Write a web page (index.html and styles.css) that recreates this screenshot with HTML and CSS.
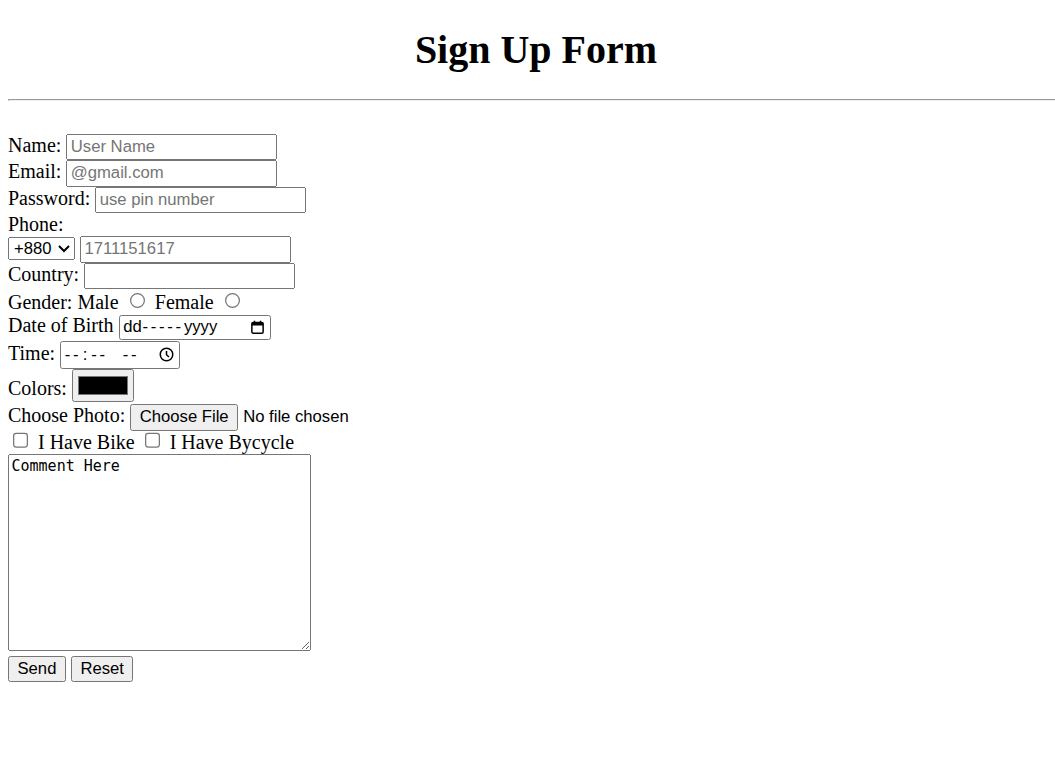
FILE: index.html
```html
<!DOCTYPE html>
<html lang="en">
<head>
<meta charset="utf-8">
<title>Sign Up Form</title>
<link rel="stylesheet" href="styles.css">
</head>
<body class="page-body">
<div class="page">
<h1 class="title">Sign Up Form</h1>
<hr class="rule">
<form class="signup">
<br>
Name: <input class="field text" type="text" placeholder="User Name"><br>
Email: <input class="field text" type="email" placeholder="@gmail.com"><br>
Password: <input class="field text" type="password" placeholder="use pin number"><br>
Phone:<br>
<select class="field code"><option>+880</option><option>+1</option></select> <input class="field text" type="tel" placeholder="1711151617"><br>
Country: <input class="field text" type="text"><br>
Gender: Male <input type="radio" name="g"> Female <input type="radio" name="g"><br>
Date of Birth <span class="fake-box date-box" role="textbox" aria-label="Date of Birth"><span class="fake-text">dd<span class="dashes">-----</span>yyyy</span><svg class="fake-icon" width="12" height="12" viewBox="0 0 12 12" aria-hidden="true"><rect x="1.5" y="2" width="9" height="8.5" rx="1" fill="none" stroke="#000" stroke-width="1.2"/><rect x="1.5" y="2" width="9" height="2.4" fill="#000"/><rect x="3" y="0.6" width="1.2" height="2" fill="#000"/><rect x="7.8" y="0.6" width="1.2" height="2" fill="#000"/></svg></span><br>
Time: <span class="fake-box time-box" role="textbox" aria-label="Time"><span class="fake-text">--<span class="colon">:</span>--&nbsp;&nbsp;--</span><svg class="fake-icon" width="12" height="12" viewBox="0 0 12 12" aria-hidden="true"><circle cx="6" cy="6" r="5" fill="none" stroke="#000" stroke-width="1.2"/><path d="M6 3.2V6.2L8 8" fill="none" stroke="#000" stroke-width="1.2"/></svg></span><br>
Colors: <input class="field color" type="color"><br>
<span class="photo-row">Choose Photo: <input class="field" type="file"></span><br>
<input type="checkbox"> I Have Bike <input type="checkbox"> I Have Bycycle<br>
<textarea class="comment">Comment Here</textarea><br>
<input class="field" type="submit" value="Send"> <input class="field" type="reset" value="Reset">
</form>
</div>
</body>
</html>
```

FILE: styles.css
```css
html {
  overflow-x: hidden;
}
.page-body {
  margin: 0 -9px 8px 8px;
  background: #fff;
  color: #000;
}
.page {
  zoom: 1.25;
  font-family: "Liberation Serif", "Times New Roman", serif;
  font-size: 16px;
}
.title {
  text-align: center;
  font-size: 2em;
  font-weight: bold;
  margin: 0.65em 0 0.64em;
}
.field {
  font-family: "Liberation Sans", Arial, sans-serif;
  font-size: 13.333px;
}
.text {
  width: 168.8px;
  box-sizing: border-box;
}
.code {
  width: 53.6px;
}
.color {
  width: 49.6px;
  height: 26.8px;
  box-sizing: border-box;
}
.photo-row {
  display: inline-block;
  padding-top: 1.5px;
  margin-bottom: -1.6px;
}
.fake-box {
  display: inline-flex;
  align-items: center;
  justify-content: space-between;
  box-sizing: border-box;
  height: 20px;
  border: 1px solid #767676;
  border-radius: 2px;
  padding: 0 3px 0 3px;
  font-family: "Liberation Sans", Arial, sans-serif;
  font-size: 13.333px;
  vertical-align: baseline;
  background: #fff;
}
.date-box {
  width: 121.6px;
}
.time-box {
  width: 96px;
  height: 22.4px;
  margin-top: 1px;
}
.fake-text {
  white-space: nowrap;
}
.time-box .fake-text {
  letter-spacing: 2.2px;
}
.colon {
  margin: 0 1px;
}
.dashes {
  letter-spacing: 2.2px;
  margin-left: 0.5px;
}
.fake-icon {
  flex: none;
  margin-right: 1px;
}
.comment {
  font-family: "DejaVu Sans Mono", "Liberation Mono", monospace;
  font-size: 12px;
  width: 242.4px;
  height: 157.6px;
  box-sizing: border-box;
}
```
